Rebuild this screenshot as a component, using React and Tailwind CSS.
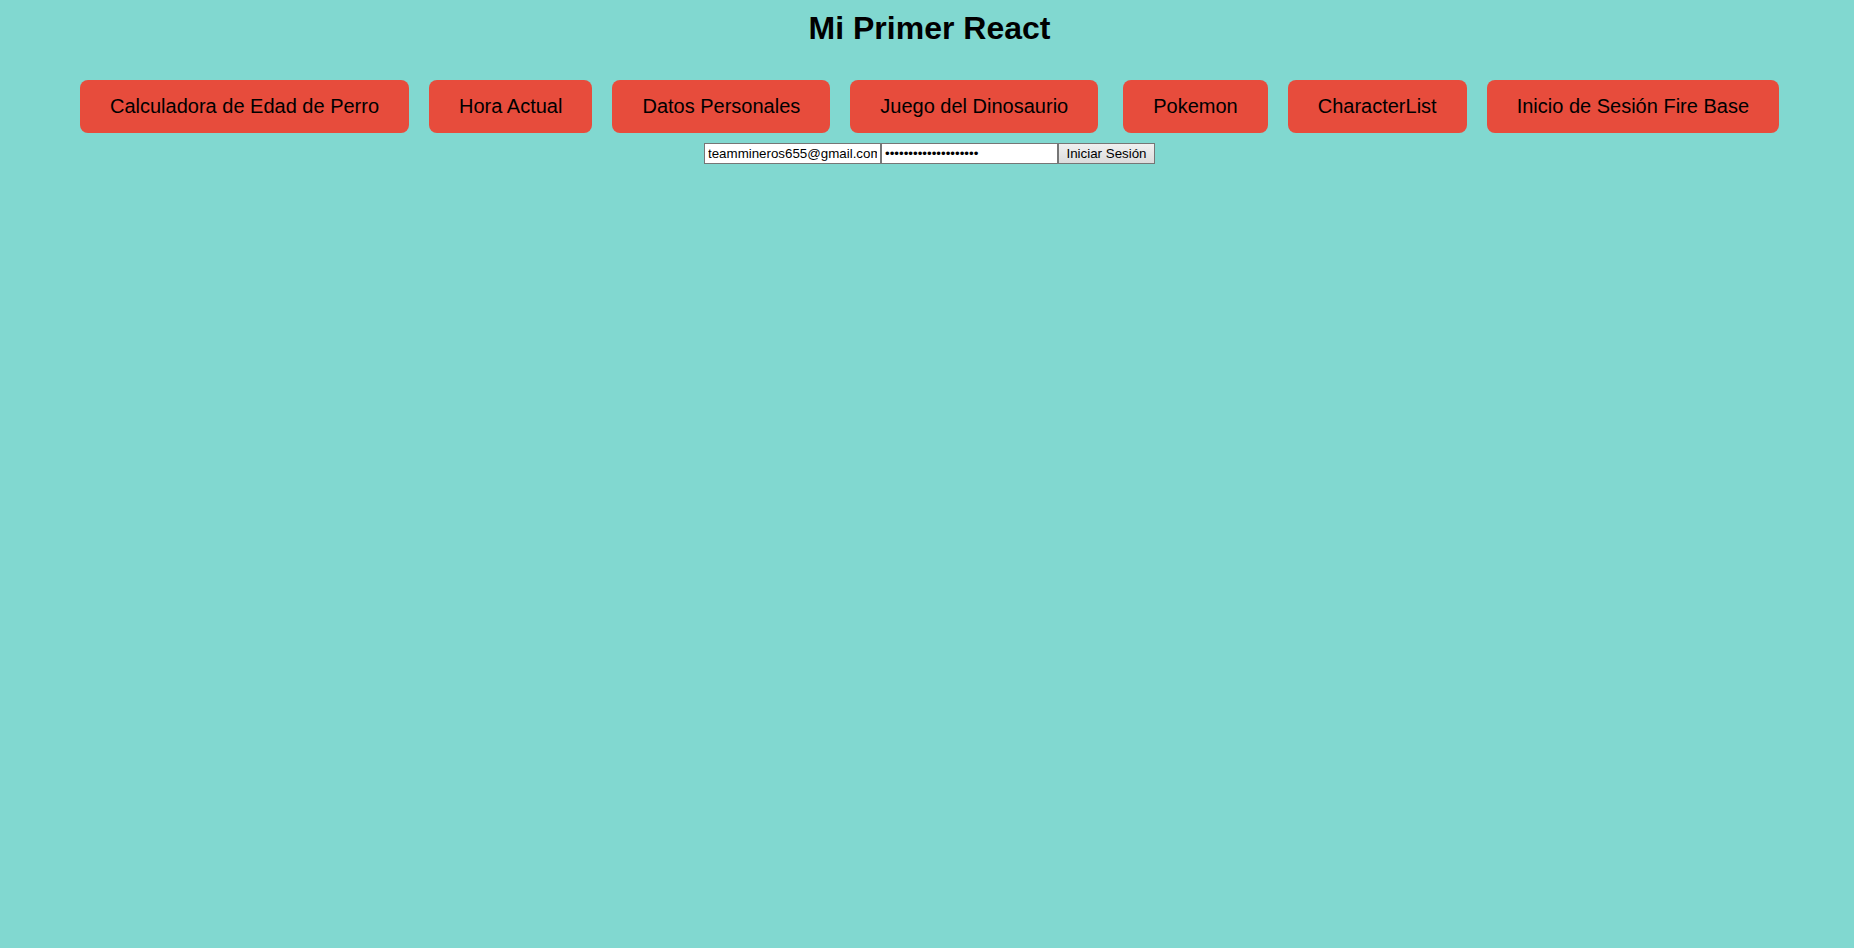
import { useState } from 'react';

const links = [
  'Calculadora de Edad de Perro',
  'Hora Actual',
  'Datos Personales',
  'Juego del Dinosaurio',
  'Pokemon',
  'CharacterList',
  'Inicio de Sesión Fire Base',
];

export default function App() {
  const [email, setEmail] = useState('teammineros655@gmail.com');
  const [password, setPassword] = useState('12345678901234567890');

  return (
    <div className="min-h-screen bg-[#81d8d0] text-black font-['Liberation_Sans',Arial,sans-serif] pt-[10px] pl-[5px]">
      {/* Title */}
      <h1 className="text-center text-[32px] leading-[37px] font-bold">Mi Primer React</h1>

      {/* Navigation buttons */}
      <nav className="mt-[33px] flex flex-wrap justify-center gap-x-5">
        {links.map((label) => (
          <button
            key={label}
            className={`bg-[#e74c3c] rounded-lg px-[30px] py-[15px] text-[20px] leading-[23px] text-black cursor-pointer ${
              label === 'Pokemon' ? 'ml-[5px]' : ''
            }`}
          >
            {label}
          </button>
        ))}
      </nav>

      {/* Login form */}
      <form className="mt-[10px] flex justify-center" onSubmit={(e) => e.preventDefault()}>
        <input
          type="email"
          value={email}
          onChange={(e) => setEmail(e.target.value)}
          className="w-[177px] h-[21px] bg-white border border-[#767676] pl-[3px] pr-[3px] text-[13.33px] leading-[15px] outline-none"
        />
        <input
          type="password"
          value={password}
          onChange={(e) => setPassword(e.target.value)}
          className="w-[177px] h-[21px] bg-white border border-[#767676] pl-[3px] pr-[3px] text-[13.33px] leading-[15px] outline-none"
        />
        <button
          type="submit"
          className="w-[97px] h-[21px] bg-gradient-to-b from-[#f0f0f0] to-[#dcdcdc] border border-[#767676] text-[13.33px] leading-[15px] text-black"
        >
          Iniciar Sesión
        </button>
      </form>
    </div>
  );
}
